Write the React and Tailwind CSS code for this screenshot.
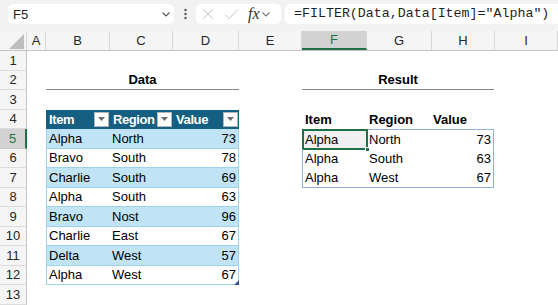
import React from "react";

const W = {
  A: "w-[19px]",
  B: "w-[64px]",
  C: "w-[63px]",
  D: "w-[66px]",
  E: "w-[63px]",
  F: "w-[65px]",
  G: "w-[65px]",
  H: "w-[63px]",
  I: "w-[63px]",
};

const data = [
  ["Alpha", "North", 73],
  ["Bravo", "South", 78],
  ["Charlie", "South", 69],
  ["Alpha", "South", 63],
  ["Bravo", "Nost", 96],
  ["Charlie", "East", 67],
  ["Delta", "West", 57],
  ["Alpha", "West", 67],
];

const result = [
  ["Alpha", "North", 73],
  ["Alpha", "South", 63],
  ["Alpha", "West", 67],
];

function Chevron({ className }) {
  return (
    <svg width="10" height="10" viewBox="0 0 10 10" className={className}>
      <path d="M1.5 3.5 L5 7 L8.5 3.5" fill="none" stroke="currentColor" strokeWidth="1.1" />
    </svg>
  );
}

function FilterButton() {
  return (
    <div className="w-[15px] h-[15px] bg-white border border-[#b5b5b5] flex items-center justify-center mr-[1px] shrink-0">
      <svg width="7" height="4" viewBox="0 0 7 4">
        <polygon points="0,0 7,0 3.5,4" fill="#6b6b6b" />
      </svg>
    </div>
  );
}

function Row({ num, active, children }) {
  return (
    <div className="flex h-[19.5px]">
      <div
        className={
          active
            ? "w-[27px] shrink-0 flex items-center justify-center bg-[#d2d2d2] text-[#1e7145] border-r-2 border-r-[#1e7145] border-b border-b-[#c6c6c6]"
            : "w-[27px] shrink-0 flex items-center justify-center bg-[#f5f5f5] text-[#262626] border-r border-r-[#c4c4c4] border-b border-b-[#dcdcdc]"
        }
      >
        {num}
      </div>
      {children}
    </div>
  );
}

function Empty({ col }) {
  return <div className={`${W[col]} shrink-0`} />;
}

export default function App() {
  const cols = ["A", "B", "C", "D", "E", "F", "G", "H", "I"];

  return (
    <div className="w-[558px] h-[305px] overflow-hidden bg-white text-[13px] text-black font-['Liberation_Sans',Arial,sans-serif] leading-none">
      {/* formula bar */}
      <div className="h-[31px] bg-[#f2f2f2] flex items-start pt-[4px] pl-[8px]">
        <div className="w-[166px] h-[20px] bg-white rounded-[5px] flex items-center justify-between pl-[5px] pr-[3px]">
          <span className="text-[13px] text-[#1f1f1f]">F5</span>
          <Chevron className="text-[#555]" />
        </div>
        <div className="w-[22px] h-[20px] flex items-center justify-center text-[#555]">
          <svg width="3" height="12" viewBox="0 0 3 12">
            <circle cx="1.5" cy="2" r="1.2" fill="#555" />
            <circle cx="1.5" cy="6" r="1.2" fill="#555" />
            <circle cx="1.5" cy="10" r="1.2" fill="#555" />
          </svg>
        </div>
        <div className="w-[85px] h-[20px] bg-white rounded-[5px] flex items-center pl-[5px]">
          <svg width="14" height="14" viewBox="0 0 14 14" className="mr-[9px]">
            <path d="M2 2 L12 12 M12 2 L2 12" stroke="#c4c4c4" strokeWidth="1" fill="none" />
          </svg>
          <svg width="15" height="14" viewBox="0 0 15 14" className="mr-[9px]">
            <path d="M1 7.5 L5 11.5 L14 2.5" stroke="#c4c4c4" strokeWidth="1" fill="none" />
          </svg>
          <span className="font-['Liberation_Serif',serif] italic text-[16px] text-[#333] mr-[1px]">fx</span>
          <Chevron className="text-[#777]" />
        </div>
        <div className="flex-1 h-[20px] ml-[4px] bg-white rounded-l-[5px] flex items-center pl-[9px] font-['Liberation_Mono',monospace] text-[13.3px] text-[#1f1f1f]">
          =FILTER(Data,Data[Item]="Alpha")
        </div>
      </div>

      {/* column headers */}
      <div className="flex h-[20px] bg-[#f5f5f5] border-b border-b-[#c4c4c4]">
        <div className="w-[27px] shrink-0 flex items-end justify-end pr-[2px] pb-[1px] border-r border-r-[#d6d6d6]">
          <svg width="15" height="15" viewBox="0 0 15 15">
            <polygon points="15,0 15,15 0,15" fill="#bdbdbd" />
          </svg>
        </div>
        {cols.map((c) =>
          c === "F" ? (
            <div
              key={c}
              className={`${W[c]} shrink-0 flex items-center justify-center bg-[#d2d2d2] text-[#1e7145] border-b-2 border-b-[#1e7145] border-r border-r-[#d6d6d6]`}
            >
              {c}
            </div>
          ) : (
            <div
              key={c}
              className={`${W[c]} shrink-0 flex items-center justify-center text-[#262626] border-r border-r-[#d6d6d6]`}
            >
              {c}
            </div>
          )
        )}
      </div>

      <Row num={1}>
        <div />
      </Row>

      <Row num={2}>
        <Empty col="A" />
        <div className="w-[193px] shrink-0 flex items-center justify-center font-bold border-b border-b-[#8a8a8a]">
          Data
        </div>
        <Empty col="E" />
        <div className="w-[192px] shrink-0 flex items-center justify-center font-bold border-b border-b-[#8a8a8a]">
          Result
        </div>
      </Row>

      <Row num={3}>
        <div />
      </Row>

      <Row num={4}>
        <Empty col="A" />
        <div className="w-[193px] shrink-0 flex bg-[#156082] text-white font-bold tracking-[-0.4px]">
          <div className="w-[64px] flex items-center justify-between pl-[3px]">
            <span>Item</span>
            <FilterButton />
          </div>
          <div className="w-[63px] flex items-center justify-between pl-[3px]">
            <span>Region</span>
            <FilterButton />
          </div>
          <div className="w-[66px] flex items-center justify-between pl-[3px]">
            <span>Value</span>
            <FilterButton />
          </div>
        </div>
        <Empty col="E" />
        <div className="w-[65px] shrink-0 flex items-center pl-[3px] font-bold">Item</div>
        <div className="w-[65px] shrink-0 flex items-center pl-[2px] font-bold">Region</div>
        <div className="w-[63px] shrink-0 flex items-center pl-[1px] font-bold">Value</div>
      </Row>

      {data.map((d, i) => {
        const num = i + 5;
        const banded = i % 2 === 0;
        const last = i === data.length - 1;
        const r = result[i];
        return (
          <Row key={num} num={num} active={num === 5}>
            <Empty col="A" />
            <div
              className={`relative w-[193px] shrink-0 flex border-x border-x-[#9fd3ec] border-b border-b-[#9fd3ec] ${
                banded ? "bg-[#c0e4f5]" : "bg-white"
              }`}
            >
              <div className="w-[63px] flex items-center pl-[2px]">{d[0]}</div>
              <div className="w-[63px] flex items-center pl-[2px]">{d[1]}</div>
              <div className="w-[65px] flex items-center justify-end pr-[2px]">{d[2]}</div>
              {last && (
                <svg width="5" height="5" viewBox="0 0 5 5" className="absolute right-[-1px] bottom-[-1px]">
                  <polygon points="5,0 5,5 0,5" fill="#2f5597" />
                </svg>
              )}
            </div>
            <Empty col="E" />
            {r && (
              <div
                className={`relative w-[192px] shrink-0 flex border-x border-x-[#8eb0e0] ${
                  i === 0 ? "border-t border-t-[#8eb0e0]" : ""
                } ${i === result.length - 1 ? "border-b border-b-[#8eb0e0]" : ""}`}
              >
                <div
                  className={`relative w-[64px] flex items-center pl-[2px] ${i === 0 ? "bg-[#f0f0f0]" : ""}`}
                >
                  {r[0]}
                  {i === 0 && (
                    <>
                      <div className="absolute left-[-1px] top-[-1px] right-[-1px] bottom-[-1px] border-2 border-[#1e7145]" />
                      <div className="absolute right-[-3px] bottom-[-3px] w-[5px] h-[5px] bg-[#1e7145] border border-white" />
                    </>
                  )}
                </div>
                <div className="w-[65px] flex items-center pl-[2px]">{r[1]}</div>
                <div className="w-[61px] flex items-center justify-end pr-[2px]">{r[2]}</div>
              </div>
            )}
          </Row>
        );
      })}

      <Row num={13}>
        <div />
      </Row>
    </div>
  );
}
